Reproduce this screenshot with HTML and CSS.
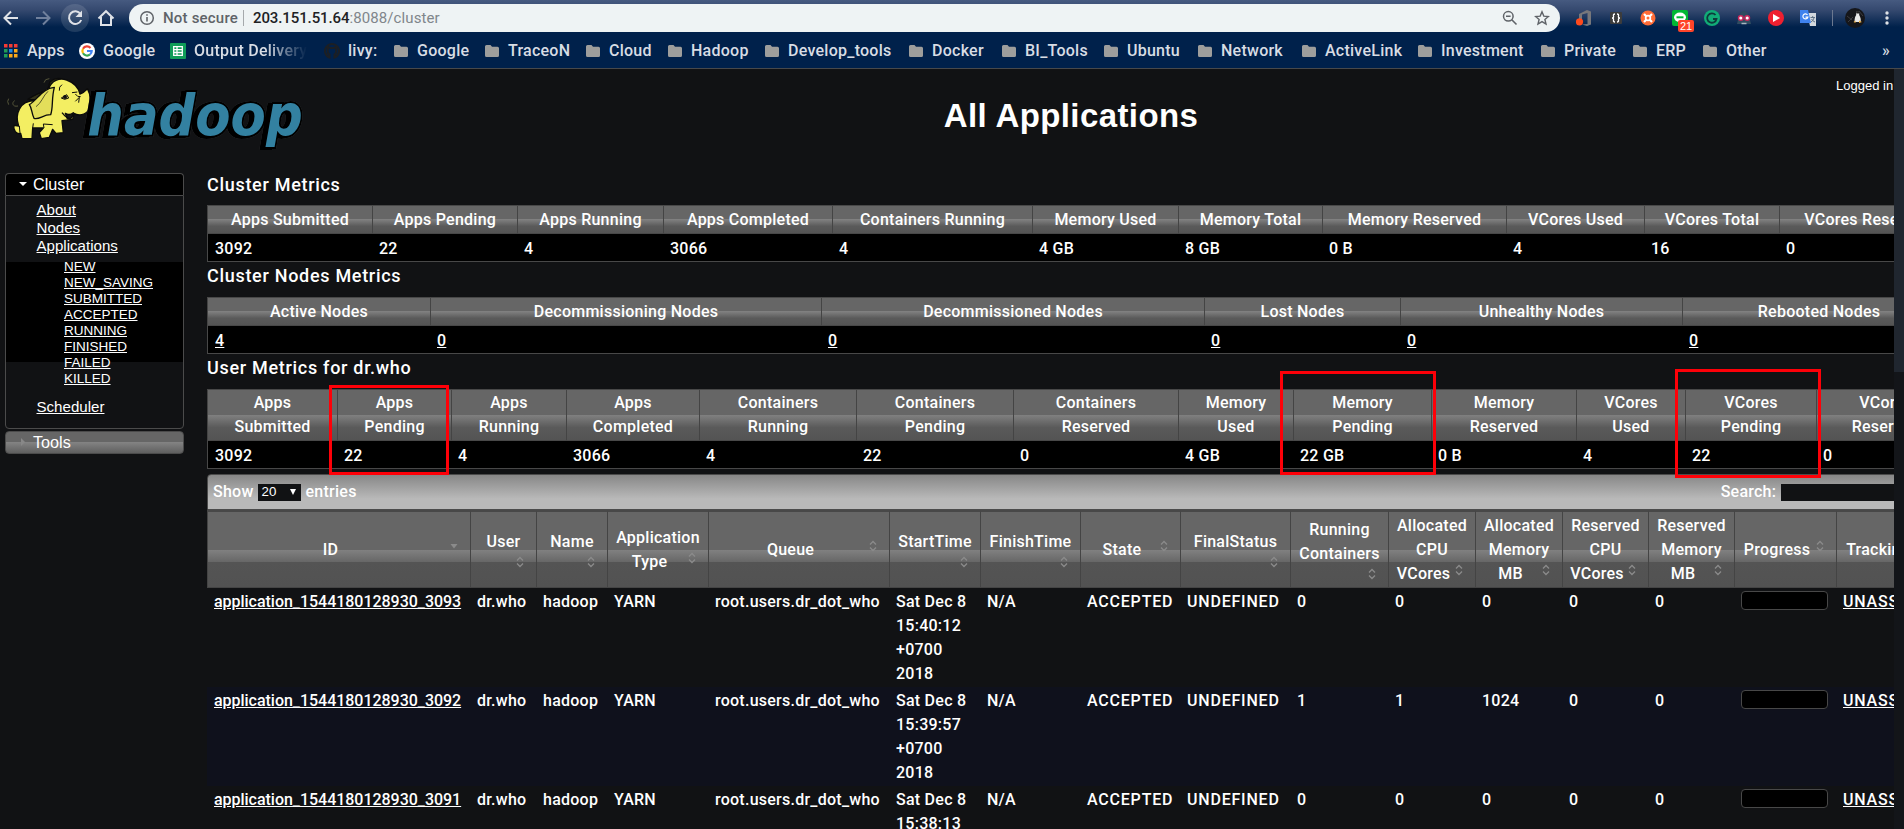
FILE: index.html
```
<!DOCTYPE html>
<html lang="en">
<head>
<meta charset="utf-8">
<title>All Applications</title>
<link rel="stylesheet" href="styles.css">
</head>
<body>
<svg width="0" height="0" class="defs">
  <defs>
    <symbol id="folder" viewBox="0 0 14 12"><path d="M1.500 0H5.500L7 1.800H12.500Q14 1.800 14 3.300V10.500Q14 12 12.500 12H1.500Q0 12 0 10.500V1.500Q0 0 1.500 0Z" fill="#9e9e9c"/></symbol>
    <symbol id="sort" viewBox="0 0 16 16"><path d="M5 6.500L8 3.500L11 6.500M5 9.500L8 12.500L11 9.500" fill="none" stroke="#8b8b8b" stroke-width="1.300"/></symbol>
    <symbol id="desc" viewBox="0 0 16 16"><path d="M4.500 6H11.500L8 10.500Z" fill="#8b8b8b"/></symbol>
  </defs>
</svg>
<header class="chrome">
  <div class="toolbar">
    <div class="nav">
      <svg width="20" height="20" viewBox="0 0 20 20"><path d="M17 10H4M10 3.500L3.500 10L10 16.500" fill="none" stroke="#dfe2e7" stroke-width="2"/></svg>
      <svg width="20" height="20" viewBox="0 0 20 20"><path d="M3 10H16M10 3.500L16.500 10L10 16.500" fill="none" stroke="#70809c" stroke-width="2"/></svg>
      <span class="reload"><svg width="20" height="20" viewBox="0 0 20 20"><path d="M15.500 6A6.300 6.300 0 1 0 16.200 12" fill="none" stroke="#dfe2e7" stroke-width="2"/><path d="M17 2.500V9H10.500Z" fill="#dfe2e7"/></svg></span>
      <svg width="20" height="20" viewBox="0 0 20 20"><path d="M2.500 10.500L10 3.200L17.500 10.500M5 9V17H15V9" fill="none" stroke="#dfe2e7" stroke-width="2"/></svg>
    </div>
    <div class="omnibox">
      <svg class="info" width="16" height="16" viewBox="0 0 16 16"><circle cx="8" cy="8" r="6.300" fill="none" stroke="#5f6368" stroke-width="1.500"/><path d="M8 7V11.500M8 4.200V5.800" stroke="#5f6368" stroke-width="1.600"/></svg>
      <span class="insecure">Not secure</span>
      <span class="bar"></span>
      <span class="url">203.151.51.64<span class="dim">:8088/cluster</span></span>
      <svg class="lens" width="16" height="16" viewBox="0 0 16 16"><circle cx="6.300" cy="6.300" r="4.800" fill="none" stroke="#5f6368" stroke-width="1.500"/><path d="M9.800 9.800L14.500 14.500M4 6.300H8.600" stroke="#5f6368" stroke-width="1.600"/></svg>
      <svg class="star" width="16" height="16" viewBox="0 0 16 16"><path d="M8 1.800L9.800 6.100L14.400 6.500L10.900 9.500L12 14L8 11.600L4 14L5.100 9.500L1.600 6.500L6.200 6.100Z" fill="none" stroke="#5f6368" stroke-width="1.400"/></svg>
    </div>
    <div class="exts">
      <svg viewBox="0 0 16 16"><path d="M3 4L11 0L15 1.500V14.500L11 16L6 14.500L11.500 14V3L6 4.500V10H3Z" fill="#77777b"/><circle cx="3.500" cy="11.800" r="3.600" fill="#ff4a1c"/></svg>
      <svg viewBox="0 0 16 16"><rect x="2" y="2" width="12" height="12" rx="1" fill="#3c3c3c"/><path d="M7 4Q5 4 5.500 6T4 8Q5.800 8 5.500 10T7 12M9 4Q11 4 10.500 6T12 8Q10.200 8 10.500 10T9 12" fill="none" stroke="#fff" stroke-width="1.300"/></svg>
      <svg viewBox="0 0 16 16"><circle cx="8" cy="8" r="7.500" fill="#ff6c37"/><path d="M4 4L12 12M12 4L4 12" stroke="#fff" stroke-width="2.200"/><circle cx="8" cy="8" r="3.200" fill="#fff"/><circle cx="8" cy="8" r="1.500" fill="#ff6c37"/></svg>
      <span class="line"><svg viewBox="0 0 16 16"><rect width="16" height="16" rx="2" fill="#00b833"/><ellipse cx="8" cy="7.300" rx="6" ry="4.800" fill="#fff"/><path d="M7 11L8 14L11 11Z" fill="#fff"/><path d="M4.500 7.300H11.500" stroke="#00b833" stroke-width="2"/></svg><b>21</b></span>
      <svg viewBox="0 0 16 16"><circle cx="8" cy="8" r="8" fill="#11ac77"/><path d="M11.500 5A4.700 4.700 0 1 0 12.500 9H9" fill="none" stroke="#0d3a3c" stroke-width="1.800"/></svg>
      <svg viewBox="0 0 16 16"><path d="M3 6L5 2.500Q8 -1 11 2.500L13 6L15 14H1Z" fill="#304c60"/><circle cx="4.800" cy="8" r="2.300" fill="#fff" stroke="#c9285b" stroke-width="1.500"/><circle cx="11.200" cy="8" r="2.300" fill="#fff" stroke="#c9285b" stroke-width="1.500"/><path d="M5.500 13.500H10.500" stroke="#a9b5c0" stroke-width="1.500"/></svg>
      <svg viewBox="0 0 16 16"><circle cx="8" cy="8" r="8" fill="#ef2030"/><path d="M5 4L12 8L5 12Z" fill="#fff"/></svg>
      <svg viewBox="0 0 16 16"><path d="M7 3H16V16H10Z" fill="#d3d8de"/><path d="M0 0H8L11 13H0Z" fill="#3f82ee"/><path d="M7.500 5A2.500 2.500 0 1 0 7.800 7.200H5.500" fill="none" stroke="#fff" stroke-width="1.200"/><path d="M10.500 7.500H15M12.700 6V8M14 8Q13 11 11 12M11.500 9Q13 11.500 15 12" stroke="#627487" fill="none"/></svg>
    </div>
    <span class="vsep"></span>
    <svg class="avatar" width="20" height="20" viewBox="0 0 20 20"><circle cx="10" cy="10" r="10" fill="#15161a"/><path d="M2 8L7 12M3 14L8 9M14 3L18 8" stroke="#3b3b3f"/><path d="M12.500 3Q14.500 3.500 14.200 7Q16.500 11 15.500 14H9.500Q9.500 9 11.200 7Q10.800 3.500 12.500 3Z" fill="#e8e8e8"/><path d="M11 4Q12.500 2 14.500 4L14 5.500H11.500Z" fill="#202020"/><path d="M8.500 14L10.500 12.500L10.500 15ZM14 15L14 12.500L17 14Z" fill="#e7ab40"/></svg>
    <svg class="dots" width="4" height="16" viewBox="0 0 4 16"><circle cx="2" cy="3" r="1.700"/><circle cx="2" cy="8" r="1.700"/><circle cx="2" cy="13" r="1.700"/></svg>
  </div>
  <nav class="bookmarks">
    <a><svg width="14" height="14" viewBox="0 0 14 14"><g fill="#f33b35"><path d="M0 0h3.500v3.500H0zM5 0h3.500v3.500H5zM10 0h3.500v3.500H10z"/></g><path d="M0 5h3.500v3.500H0zM0 10h3.500v3.500H0z" fill="#1f9d58"/><path d="M5 5h3.500v3.500H5z" fill="#1e88e5"/><path d="M10 5h3.500v3.500H10zM5 10h3.500v3.500H5zM10 10h3.500v3.500H10z" fill="#fba919"/></svg>Apps</a>
    <a><svg width="16" height="16" viewBox="0 0 16 16"><circle cx="8" cy="8" r="8" fill="#fff"/><g fill="none" stroke-width="2.200"><path d="M11.500 5A4.700 4.700 0 0 0 4 5.700" stroke="#ea4335"/><path d="M4 5.700A4.700 4.700 0 0 0 4 10.300" stroke="#fbbc05"/><path d="M4 10.300A4.700 4.700 0 0 0 11 11.500" stroke="#34a853"/><path d="M11 11.500A4.700 4.700 0 0 0 12.700 8H8" stroke="#4285f4"/></g></svg>Google</a>
    <a class="fade"><svg width="16" height="16" viewBox="0 0 16 16"><rect width="16" height="16" rx="1" fill="#0f9d58"/><path d="M3.700 3.700H12.300V12.300H3.700ZM3.700 6.600H12.300M3.700 9.500H12.300M7 3.700V12.300" fill="none" stroke="#fff" stroke-width="1.300"/></svg>Output Delivery</a>
    <a><svg width="16" height="16" viewBox="0 0 16 16"><path d="M5.500 14.500A7 7 0 1 1 10.500 14.500V11.500Q12.500 10.500 12.200 7.500Q12.500 5 11.500 4L9.800 5H6.200L4.500 4Q3.500 5 3.800 7.500Q3.500 10.500 5.500 11.500Z" fill="none" stroke="#1b1f24" stroke-width="2"/></svg>livy:</a>
    <a><svg class="f"><use href="#folder"/></svg>Google</a>
    <a><svg class="f"><use href="#folder"/></svg>TraceoN</a>
    <a><svg class="f"><use href="#folder"/></svg>Cloud</a>
    <a><svg class="f"><use href="#folder"/></svg>Hadoop</a>
    <a><svg class="f"><use href="#folder"/></svg>Develop_tools</a>
    <a><svg class="f"><use href="#folder"/></svg>Docker</a>
    <a><svg class="f"><use href="#folder"/></svg>BI_Tools</a>
    <a><svg class="f"><use href="#folder"/></svg>Ubuntu</a>
    <a><svg class="f"><use href="#folder"/></svg>Network</a>
    <a><svg class="f"><use href="#folder"/></svg>ActiveLink</a>
    <a><svg class="f"><use href="#folder"/></svg>Investment</a>
    <a><svg class="f"><use href="#folder"/></svg>Private</a>
    <a><svg class="f"><use href="#folder"/></svg>ERP</a>
    <a><svg class="f"><use href="#folder"/></svg>Other</a>
    <a class="more">»</a>
  </nav>
</header>
<div class="window">
<div class="page">
  <div class="banner">
    <svg class="logo" width="320" height="80" viewBox="0 0 960 240">
      <g stroke="#0b0b0b" stroke-width="4" stroke-linejoin="round">
        <path d="M54 108C38 112 34 98 44 92M26 86Q20 94 26 104M132 38Q134 26 148 26" fill="none" stroke="#55553a" stroke-width="3"/>
        <path d="M84 88Q110 70 142 62L150 36Q165 22 185 26L140 90Z" fill="#33321b"/>
        <path d="M58 118C66 100 85 92 108 92L146 56C154 32 178 22 200 30C222 38 236 54 240 72C250 70 256 62 262 56C272 72 274 104 266 120C256 136 234 138 222 130L218 148L186 152L190 188L168 190L158 178L148 202L124 206L118 188L130 174L98 174L96 206L66 206L62 190C50 194 38 180 42 166L56 168C50 150 50 132 58 118Z" fill="#f3ee62"/>
        <path d="M60 190L58 168M98 174L100 160M132 174L130 162L158 164" fill="none" stroke-width="3"/>
        <path d="M163 52C128 54 112 90 88 104C96 114 94 128 102 145C118 150 128 134 152 134C160 112 154 86 163 52Z" fill="#e3de5a"/>
        <path d="M108 110C124 100 130 76 144 64" fill="none" stroke-width="2"/>
        <path d="M196 130Q208 138 220 128Q218 150 202 146Z" fill="#161616"/>
        <path d="M184 84L200 74L206 84L194 88ZM226 72Q232 82 242 80M226 94L238 82L236 98M178 62Q176 50 186 44M216 68L232 66" fill="none" stroke-width="3"/>
        <circle cx="195" cy="81" r="6" fill="#111" stroke="none"/>
        <path d="M186 128C194 138 204 148 214 146" fill="none" stroke-width="4"/>
      </g>
      <text class="word" x="262" y="194" textLength="646" lengthAdjust="spacingAndGlyphs">hadoop</text>
    </svg>
    <h1>All Applications</h1>
    <span class="login">Logged in</span>
  </div>
  <div class="columns">
    <aside>
      <h3 class="open"><i class="down"></i>Cluster</h3>
      <div class="menu">
        <ul class="top"><li><a>About</a></li><li><a>Nodes</a></li><li><a>Applications</a></li></ul>
        <ul class="states"><li><a>NEW</a></li><li><a>NEW_SAVING</a></li><li><a>SUBMITTED</a></li><li><a>ACCEPTED</a></li><li><a>RUNNING</a></li><li><a>FINISHED</a></li><li><a>FAILED</a></li><li><a>KILLED</a></li></ul>
        <ul class="last"><li><a>Scheduler</a></li></ul>
      </div>
      <h3 class="shut"><i class="right"></i>Tools</h3>
    </aside>
    <main>
      <h2>Cluster Metrics</h2>
      <table class="metrics m1">
        <colgroup><col class="c1"><col class="c2"><col class="c3"><col class="c4"><col class="c5"><col class="c6"><col class="c7"><col class="c8"><col class="c9"><col class="c10"><col class="c11"></colgroup>
        <tr><th>Apps Submitted</th><th>Apps Pending</th><th>Apps Running</th><th>Apps Completed</th><th>Containers Running</th><th>Memory Used</th><th>Memory Total</th><th>Memory Reserved</th><th>VCores Used</th><th>VCores Total</th><th>VCores Reserved</th></tr>
        <tr><td>3092</td><td>22</td><td>4</td><td>3066</td><td>4</td><td>4 GB</td><td>8 GB</td><td>0 B</td><td>4</td><td>16</td><td>0</td></tr>
      </table>
      <h2>Cluster Nodes Metrics</h2>
      <table class="metrics m2">
        <colgroup><col class="c1"><col class="c2"><col class="c3"><col class="c4"><col class="c5"><col class="c6"></colgroup>
        <tr><th>Active Nodes</th><th>Decommissioning Nodes</th><th>Decommissioned Nodes</th><th>Lost Nodes</th><th>Unhealthy Nodes</th><th>Rebooted Nodes</th></tr>
        <tr><td><a>4</a></td><td><a>0</a></td><td><a>0</a></td><td><a>0</a></td><td><a>0</a></td><td><a>0</a></td></tr>
      </table>
      <h2>User Metrics for dr.who</h2>
      <table class="metrics m3">
        <colgroup><col class="c1"><col class="c2"><col class="c3"><col class="c4"><col class="c5"><col class="c6"><col class="c7"><col class="c8"><col class="c9"><col class="c10"><col class="c11"><col class="c12"><col class="c13"></colgroup>
        <tr><th>Apps<br>Submitted</th><th>Apps<br>Pending</th><th>Apps<br>Running</th><th>Apps<br>Completed</th><th>Containers<br>Running</th><th>Containers<br>Pending</th><th>Containers<br>Reserved</th><th>Memory<br>Used</th><th>Memory<br>Pending</th><th>Memory<br>Reserved</th><th>VCores<br>Used</th><th>VCores<br>Pending</th><th>VCores<br>Reserved</th></tr>
        <tr><td>3092</td><td>22</td><td>4</td><td>3066</td><td>4</td><td>22</td><td>0</td><td>4 GB</td><td>22 GB</td><td>0 B</td><td>4</td><td>22</td><td>0</td></tr>
      </table>
      <div class="tools"><span>Show</span><span class="select">20<i></i></span><span>entries</span><span class="find">Search:</span><span class="input"></span></div>
      <table class="apps">
        <colgroup><col class="c1"><col class="c2"><col class="c3"><col class="c4"><col class="c5"><col class="c6"><col class="c7"><col class="c8"><col class="c9"><col class="c10"><col class="c11"><col class="c12"><col class="c13"><col class="c14"><col class="c15"><col class="c16"></colgroup>
        <thead><tr>
          <th><svg><use href="#desc"/></svg>ID</th>
          <th>User<br><svg><use href="#sort"/></svg></th>
          <th>Name<br><svg><use href="#sort"/></svg></th>
          <th>Application<br><svg><use href="#sort"/></svg>Type</th>
          <th><svg><use href="#sort"/></svg>Queue</th>
          <th>StartTime<br><svg><use href="#sort"/></svg></th>
          <th>FinishTime<br><svg><use href="#sort"/></svg></th>
          <th><svg><use href="#sort"/></svg>State</th>
          <th>FinalStatus<br><svg><use href="#sort"/></svg></th>
          <th>Running<br>Containers<br><svg><use href="#sort"/></svg></th>
          <th>Allocated<br>CPU<br><svg><use href="#sort"/></svg>VCores</th>
          <th>Allocated<br>Memory<br><svg><use href="#sort"/></svg>MB</th>
          <th>Reserved<br>CPU<br><svg><use href="#sort"/></svg>VCores</th>
          <th>Reserved<br>Memory<br><svg><use href="#sort"/></svg>MB</th>
          <th><svg><use href="#sort"/></svg>Progress</th>
          <th><svg><use href="#sort"/></svg>Tracking UI</th>
        </tr></thead>
        <tbody>
        <tr><td><a>application_1544180128930_3093</a></td><td>dr.who</td><td>hadoop</td><td>YARN</td><td>root.users.dr_dot_who</td><td>Sat Dec 8<br>15:40:12<br>+0700<br>2018</td><td>N/A</td><td class="caps">ACCEPTED</td><td class="caps">UNDEFINED</td><td>0</td><td>0</td><td>0</td><td>0</td><td>0</td><td><div class="progress"></div></td><td class="caps"><a>UNASSIGNED</a></td></tr>
        <tr><td><a>application_1544180128930_3092</a></td><td>dr.who</td><td>hadoop</td><td>YARN</td><td>root.users.dr_dot_who</td><td>Sat Dec 8<br>15:39:57<br>+0700<br>2018</td><td>N/A</td><td class="caps">ACCEPTED</td><td class="caps">UNDEFINED</td><td>1</td><td>1</td><td>1024</td><td>0</td><td>0</td><td><div class="progress"></div></td><td class="caps"><a>UNASSIGNED</a></td></tr>
        <tr><td><a>application_1544180128930_3091</a></td><td>dr.who</td><td>hadoop</td><td>YARN</td><td>root.users.dr_dot_who</td><td>Sat Dec 8<br>15:38:13<br>+0700<br>2018</td><td>N/A</td><td class="caps">ACCEPTED</td><td class="caps">UNDEFINED</td><td>0</td><td>0</td><td>0</td><td>0</td><td>0</td><td><div class="progress"></div></td><td class="caps"><a>UNASSIGNED</a></td></tr>
        </tbody>
      </table>
    </main>
  </div>
  <div class="mark mark-apps"></div>
  <div class="mark mark-memory"></div>
  <div class="mark mark-vcores"></div>
</div>
<div class="scrollbar"><div class="thumb"></div></div>
</div>
</body>
</html>
```
FILE: styles.css
```
* { box-sizing: border-box; }
html, body { margin: 0; height: 829px; overflow: hidden; background: #111214; }
body { font: 500 16px/24px Roboto, sans-serif; letter-spacing: .25px; color: #fff; }
svg { display: block; flex: none; }
.defs { position: absolute; }

/* browser chrome */
.chrome { height: 69px; background: #00214b; border-bottom: 1px solid #47494b; }
.toolbar { height: 36px; display: flex; align-items: center; background: linear-gradient(#465a80 0, #35496f 10px, #00214b 27px); }
.nav { width: 129px; display: flex; align-items: center; padding-left: 1px; gap: 8px; }
.nav svg:nth-child(2) { margin-left: 4px; }
.reload { width: 28px; height: 28px; border-radius: 50%; background: rgba(255,255,255,.12); display: grid; place-items: center; }
.nav svg:last-child { margin-left: -1px; }
.omnibox { width: 1431px; height: 28px; border-radius: 14px; background: #eef3f4; display: flex; align-items: center; font-size: 15px; padding-left: 10px; }
.insecure { width: 80px; margin-left: 8px; color: #5f6368; letter-spacing: .2px; white-space: nowrap; }
.bar { width: 1px; height: 16px; background: #a5a9ac; }
.url { margin-left: 9px; color: #202124; flex: 1; letter-spacing: -.1px; }
.dim { color: #80868b; font-weight: 400; letter-spacing: .1px; }
.star { margin: 0 10px 0 16px; }
.exts { display: flex; gap: 16px; margin-left: 16px; }
.exts svg { width: 16px; height: 16px; }
.line { position: relative; }
.line b { position: absolute; left: 6px; top: 10px; width: 16px; height: 12px; border-radius: 2px; background: #ff4429; font: 11px/12px "Liberation Sans", sans-serif; letter-spacing: 0; text-align: center; }
.vsep { width: 1px; height: 16px; margin-left: 16px; background: #6b7890; }
.avatar { margin-left: 12px; }
.dots { margin-left: 20px; fill: #dfe2e7; }
.bookmarks { height: 29px; display: grid; align-items: center; padding-left: 4px; grid-template-columns: 75px 91px 154px 70px 91px 101px 82px 97px 144px 93px 102px 94px 104px 116px 123px 92px 70px 179px 20px; color: #d8dde4; }
.bookmarks a { display: flex; align-items: center; gap: 9px; white-space: nowrap; }
.bookmarks a:nth-child(-n+4) { gap: 8px; }
.bookmarks a:first-child { gap: 9px; }
.fade { width: 138px; overflow: hidden; -webkit-mask-image: linear-gradient(90deg, #000 95px, transparent 137px); mask-image: linear-gradient(90deg, #000 95px, transparent 137px); }
.f { width: 14px; height: 12px; }

/* page */
.window { display: flex; height: 760px; }
.page { width: 1894px; overflow: hidden; position: relative; }
.scrollbar { width: 10px; background: #131519; }
.thumb { height: 303px; background: #20262f; }
.banner { height: 104px; padding-top: 1px; display: grid; grid-template-columns: 320px 1502px 72px; }
.word { font: italic bold 171px "DejaVu Sans", sans-serif; letter-spacing: 0; fill: #3381a1; stroke: #000; stroke-width: 12px; stroke-linejoin: miter; paint-order: stroke; filter: drop-shadow(-12px 3px 0 #000) drop-shadow(0 0 2px #4a4d50); }
h1 { margin: 27px 0 0; text-align: center; font: bold 33px/38px "Liberation Sans", sans-serif; letter-spacing: .4px; }
.login { padding: 4px 0 0 14px; font: 13px/24px "Liberation Sans", sans-serif; letter-spacing: 0; white-space: nowrap; }
.columns { display: flex; }

aside { flex: none; width: 207px; padding-left: 5px; font-family: "Liberation Sans", sans-serif; letter-spacing: 0; }
aside h3 { margin: 0; width: 179px; border: 1px solid #4b4b4b; font-size: 16.200px; line-height: 20px; font-weight: 400; display: flex; align-items: center; }
.open { height: 22px; background: #000; border-radius: 4px 4px 0 0; border-bottom: 0 !important; }
.shut { height: 23px; margin-top: 2px !important; border-radius: 4px; background: linear-gradient(#666 0, #666 50%, #828282 50%, #5f5f5f 100%); }
.shut, .open { padding-bottom: 1px; }
.down { margin: 0 6px 0 13px; border: 4px solid transparent; border-top-color: #fff; border-bottom: 0; }
.right { margin: 0 8px 0 15px; border: 4px solid transparent; border-left-color: #888; border-right: 0; }
.menu { width: 179px; height: 234px; border: 1px solid #4b4b4b; border-radius: 0 0 4px 4px; font-weight: 400; font-size: 15.100px; line-height: 18px; }
.menu ul { margin: 0; padding: 0; list-style: none; }
.menu a, td a { text-decoration: underline; }
.menu .top { padding: 5px 0 6px 30.500px; height: 66px; }
.menu .states { height: 100px; padding: 0 0 0 58px; margin-bottom: 36px; background: #000; font-size: 13.500px; line-height: 16px; display: flex; flex-direction: column; }
.menu .states li:first-child { margin-top: -3px; }
.menu .last { padding-left: 30.500px; }

main { width: 1749px; flex: none; }
h2 { margin: 0; height: 32px; font-weight: 500; font-size: 18px; line-height: 24px; letter-spacing: .7px; }
table { width: 1749px; table-layout: fixed; border-collapse: separate; border-spacing: 0; }
th { font-weight: 500; padding: 0; border-left: 1px solid #444; white-space: nowrap; background: linear-gradient(#666 0, #666 50%, #808080 50%, #5a5a5a 75%, #545454 100%); }
td { padding: 0 0 0 7px; white-space: nowrap; }
.metrics { background: #000; border: 1px solid #484848; border-left: 0; }
.metrics th { height: 28px; padding-top: 1px; border-bottom: 1px solid #484848; }
.metrics td { height: 27px; padding-left: 7px; padding-top: 2px; }
.metrics td:first-child { border-left: 1px solid #484848; }
.metrics + h2 { padding-top: 2px; height: 35px; }
.metrics.m3 th { height: 51px; padding-top: 0; }
.m1 .c1 { width: 165px; } .m1 .c2 { width: 145px; } .m1 .c3 { width: 146px; } .m1 .c4 { width: 169px; }
.m1 .c5 { width: 200px; } .m1 .c6 { width: 146px; } .m1 .c7 { width: 144px; } .m1 .c8 { width: 184px; }
.m1 .c9 { width: 138px; } .m1 .c10 { width: 135px; }
.m2 .c1 { width: 223px; } .m2 .c2 { width: 391px; } .m2 .c3 { width: 383px; } .m2 .c4 { width: 196px; } .m2 .c5 { width: 282px; }
.m3 .c1 { width: 130px; } .m3 .c2 { width: 114px; } .m3 .c3 { width: 115px; } .m3 .c4 { width: 133px; }
.m3 .c5 { width: 157px; } .m3 .c6 { width: 157px; } .m3 .c7 { width: 165px; } .m3 .c8 { width: 115px; }
.m3 .c9 { width: 138px; } .m3 .c10 { width: 145px; } .m3 .c11 { width: 109px; } .m3 .c12 { width: 131px; }

.tools { margin-top: 5px; height: 36px; border: 1px solid #4b4b4b; border-radius: 4px 0 0 0; background: linear-gradient(#878787, #b9b9b9 70%); display: flex; align-items: center; padding-left: 5px; }
.select { width: 43px; height: 17px; margin: 0 5px 0 4px; background: #111214; font: 13.300px/18px "Liberation Sans", sans-serif; letter-spacing: 0; padding: 0 5px 0 4px; display: flex; align-items: center; justify-content: space-between; }
.select i { border: 3.500px solid transparent; border-top: 6px solid #fff; border-bottom: 0; }
.find { margin-left: 1364px; }
.input { margin-left: 5px; width: 170px; height: 17px; background: #111214; }
.apps thead th { height: 78px; padding: 0 7px; border-top: 2px solid #484848; border-bottom: 1px solid #444; background: linear-gradient(#666 0, #666 51%, #808080 51%, #666 67%, #545454 67%, #525252 100%); }
.apps th svg { float: right; width: 16px; height: 16px; margin-right: 1px; }
.apps td { height: 99px; padding-top: 2px; vertical-align: top; }
.apps td:first-child { letter-spacing: -.03px; }
.apps .caps { letter-spacing: .8px; }
.apps tbody tr:nth-child(even) { background: #0f111c; }
.progress { width: 87px; height: 19px; margin-top: 1px; border: 1px solid #484848; border-radius: 4px; background: #000; }
.apps .c1 { width: 263px; } .apps .c2 { width: 66px; } .apps .c3 { width: 71px; } .apps .c4 { width: 101px; }
.apps .c5 { width: 181px; } .apps .c6 { width: 91px; } .apps .c7 { width: 100px; } .apps .c8 { width: 100px; }
.apps .c9 { width: 110px; } .apps .c10 { width: 98px; } .apps .c11 { width: 87px; } .apps .c12 { width: 87px; }
.apps .c13 { width: 86px; } .apps .c14 { width: 86px; } .apps .c15 { width: 102px; }

/* highlight frames over the metrics */
.mark { position: absolute; border: 3px solid #fe0008; }
.mark-apps { left: 329px; top: 316px; width: 120px; height: 90px; }
.mark-memory { left: 1280px; top: 302px; width: 156px; height: 104px; }
.mark-vcores { left: 1675px; top: 300px; width: 146px; height: 109px; }
```
